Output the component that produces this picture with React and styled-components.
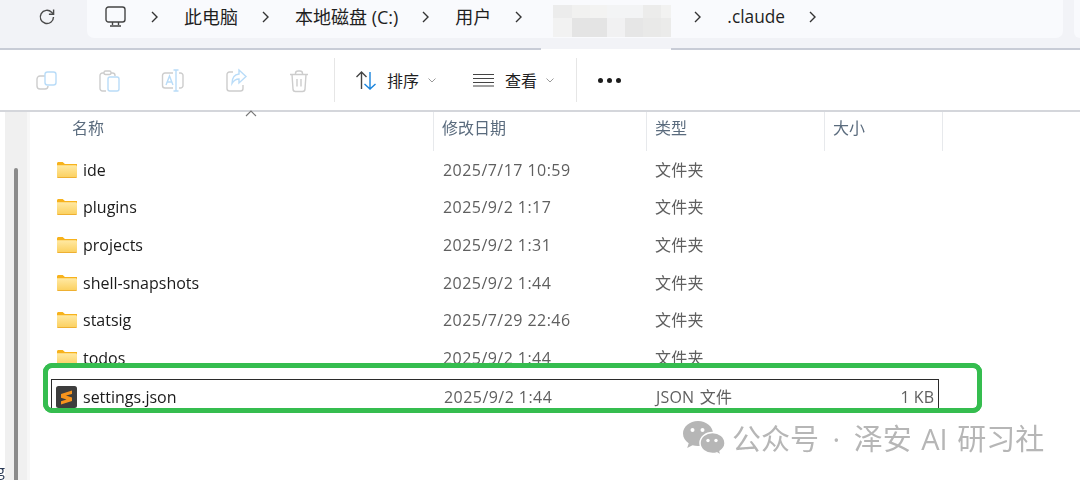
import styled, { createGlobalStyle } from 'styled-components';

const GlobalStyle = createGlobalStyle`
  html, body { margin: 0; padding: 0; background: #fff; }
  body {
    width: 1080px;
    height: 480px;
    overflow: hidden;
    font-family: "Open Sans", "Noto Sans CJK SC", sans-serif;
  }
`;

const Page = styled.div`
  position: relative;
  width: 1080px;
  height: 480px;
  overflow: hidden;
  display: flex;
  flex-direction: column;
  filter: blur(0.25px);
`;

const AddressBar = styled.div`
  height: 48px;
  flex: none;
  display: flex;
  background: #f2f3f7;
  border-bottom: 2px solid #c8ccd6;
`;
const RefreshSlot = styled.div`
  width: 87px;
  flex: none;
  display: flex;
  align-items: center;
  padding: 0 0 14px 38px;
  box-sizing: border-box;
`;
const Crumbs = styled.div`
  width: 976px;
  height: 38px;
  flex: none;
  display: flex;
  align-items: center;
  padding: 0 0 4px 18px;
  box-sizing: border-box;
  background: #f9fafd;
  border-radius: 0 0 7px 7px;
  font-size: 18px;
  color: #1f1f1f;
  margin-right: 11px;
`;
const NextPill = styled.div`
  flex: 1;
  height: 38px;
  background: #f9fafd;
  border-radius: 0 0 0 7px;
`;
const Chevron = styled.svg`
  width: 7px;
  height: 12px;
  flex: none;
  margin: 0 ${(p) => p.$gap ?? 26}px 0 ${(p) => p.$before ?? 24}px;
`;
const CrumbText = styled.span`
  white-space: nowrap;
  line-height: 1;
  font-size: ${(p) => p.$size ?? 18}px;
`;
const MosaicBand = styled.div`
  position: absolute;
  left: 541px;
  top: 38px;
  width: 130px;
  height: 11px;
  background: #f2f3f7;
  border-bottom: 3px solid #fff;
`;
const Mosaic = styled.div`
  position: absolute;
  left: 553px;
  top: 5px;
  display: grid;
  grid-template-columns: 19px 18px 17px 18px 18px 18px 10px;
  grid-template-rows: 13px 19px;
`;
const MosaicCell = styled.div`
  background: ${(p) => p.$c};
`;

const Toolbar = styled.div`
  height: 62px;
  flex: none;
  box-sizing: border-box;
  display: flex;
  align-items: center;
  background: #fff;
  border-bottom: 2px solid #d4d6db;
  padding-left: 36px;
  font-size: 16px;
  color: #1f1f1f;
`;
const ToolIcon = styled.svg`
  width: 22px;
  height: 22px;
  flex: none;
  overflow: visible;
  margin-right: ${(p) => p.$after ?? 41}px;
  fill: none;
  stroke: #cdcdcd;
  stroke-width: 1.4;
`;
const ToolDivider = styled.div`
  width: 1px;
  height: 44px;
  flex: none;
  background: #e6e6e6;
  margin-right: ${(p) => p.$after}px;
`;
const ToolLabel = styled.span`
  margin: 0 ${(p) => p.$after}px 0 ${(p) => p.$before}px;
  white-space: nowrap;
`;
const Caret = styled.svg`
  width: 8px;
  height: 5px;
  flex: none;
  margin-right: ${(p) => p.$after}px;
`;
const Dots = styled.div`
  display: flex;
  gap: 4px;
`;
const Dot = styled.i`
  width: 5px;
  height: 5px;
  border-radius: 50%;
  background: #1c1c1c;
`;

const Body = styled.div`
  flex: 1;
  display: flex;
  min-height: 0;
`;
const ClippedStrip = styled.div`
  width: 5px;
  flex: none;
  overflow: hidden;
  display: flex;
  align-items: flex-end;
  justify-content: flex-end;
  padding-bottom: 1px;
  font-size: 15px;
  line-height: 18px;
  color: #2a3a55;
`;
const Rail = styled.div`
  position: relative;
  width: 22px;
  flex: none;
  background: #f0f0f0;
`;
const RailEdge = styled.div`
  width: 3px;
  flex: none;
  background: #f7f7f7;
`;
const RailThumb = styled.div`
  position: absolute;
  left: 9px;
  top: 56px;
  bottom: 0;
  width: 4px;
  background: #8b8b8b;
  border-radius: 2px 2px 0 0;
`;
const List = styled.div`
  flex: 1;
  position: relative;
  min-width: 0;
`;
const HeaderRow = styled.div`
  height: 39px;
  display: grid;
  grid-template-columns: 404px 213px 178px 118px;
  font-size: 16px;
  color: #5a6b7d;
`;
const HeaderCell = styled.div`
  display: flex;
  align-items: center;
  box-sizing: border-box;
  padding-left: ${(p) => p.$pad}px;
  padding-bottom: 8px;
  border-right: 1px solid #e7e9ec;
  line-height: 1;
`;
const SortArrow = styled.svg`
  position: absolute;
  left: 215px;
  top: -2px;
  width: 12px;
  height: 7px;
`;
const Row = styled.div`
  height: 37.6px;
  margin-left: 21px;
  width: 888px;
  display: grid;
  grid-template-columns: 383px 213px 178px 114px;
  align-items: center;
  box-sizing: border-box;
  font-size: 16px;
  color: #5f5f5f;
`;
const SelectedRow = styled(Row)`
  position: relative;
  z-index: 2;
  height: 29px;
  margin-top: 2.4px;
  padding-top: 4px;
  border: solid #2b2b2b;
  border-width: 1px 1px 0 1px;
`;
const NameCell = styled.div`
  display: flex;
  align-items: center;
  gap: 6px;
  padding-left: 6px;
  color: #1a1a1a;
  white-space: nowrap;
`;
const DateCell = styled.div`
  padding-left: 9px;
  white-space: nowrap;
  letter-spacing: 0.45px;
`;
const TypeCell = styled.div`
  padding: 0 0 2px 8px;
  white-space: nowrap;
  word-spacing: 1px;
  letter-spacing: 0.2px;
`;
const SizeCell = styled.div`
  padding-right: 6px;
  text-align: right;
  white-space: nowrap;
`;
const FolderSvg = styled.svg`
  width: 20px;
  height: 16px;
  flex: none;
`;
const FileSvg = styled.svg`
  width: 21px;
  height: 22px;
  flex: none;
  margin-left: -2px;
`;
const GreenFrame = styled.div`
  position: absolute;
  z-index: 1;
  left: 13px;
  top: 251px;
  width: 939px;
  height: 50px;
  box-sizing: border-box;
  background: #fff;
  border: 5px solid #35bd4f;
  border-radius: 9px;
`;
const GreenCover = styled(GreenFrame)`
  z-index: 3;
  background: transparent;
`;
const Watermark = styled.div`
  position: absolute;
  z-index: 4;
  left: 683px;
  top: 417px;
  display: flex;
  align-items: center;
  gap: 7px;
  color: #b6b6b6;
  font-size: 29px;
  line-height: 38px;
  white-space: nowrap;
  font-family: "Open Sans", "Noto Sans CJK SC", sans-serif;
`;
const WatermarkText = styled.span`
  padding-top: 3px;
  word-spacing: 2px;
`;
const WatermarkDot = styled.span`
  margin: 0 4px;
`;

const folders = [
  ['ide', '2025/7/17 10:59'],
  ['plugins', '2025/9/2 1:17'],
  ['projects', '2025/9/2 1:31'],
  ['shell-snapshots', '2025/9/2 1:44'],
  ['statsig', '2025/7/29 22:46'],
  ['todos', '2025/9/2 1:44'],
];

const mosaic = [
  '#ececec', '#f1f1f0', '#f3f3f2', '#f3f4f5', '#f3f4f5', '#ececeb', '#f2f2f1',
  '#f2f2f2', '#e4e4e4', '#e4e4e4', '#f1f1f2', '#e6e6e6', '#e9e9e8', '#ebebea',
];

const ChevronIcon = (props) => (
  <Chevron viewBox="0 0 7 12" {...props}>
    <path d="M1 1l5 5-5 5" fill="none" stroke="#333" strokeWidth="1.4" />
  </Chevron>
);

const CaretIcon = ({ after }) => (
  <Caret viewBox="0 0 8 5" $after={after}>
    <path d="M.5.5L4 4 7.5.5" fill="none" stroke="#9a9a9a" strokeWidth="1" />
  </Caret>
);

const Folder = () => (
  <FolderSvg viewBox="0 0 20 16">
    <defs>
      <linearGradient id="fold" x1="0" y1="0" x2="0" y2="1">
        <stop offset="0" stopColor="#ffe9a3" />
        <stop offset="1" stopColor="#fbcf5c" />
      </linearGradient>
    </defs>
    <path d="M0 1.5C0 .6.6 0 1.5 0h4.2l2.2 2H20v3H0z" fill="#f7b21c" />
    <path d="M0 3.2h18.5c.9 0 1.5.6 1.5 1.5v9.8c0 .9-.6 1.5-1.5 1.5h-17C.6 16 0 15.4 0 14.5z" fill="url(#fold)" />
    <path d="M0 15h20v-.5c0 .9-.6 1.5-1.5 1.5h-17C.6 16 0 15.4 0 14.5z" fill="#eeb032" />
  </FolderSvg>
);

export default function App() {
  return (
    <Page>
      <GlobalStyle />
      <AddressBar>
        <RefreshSlot>
          <svg width="18" height="18" viewBox="0 0 18 18" fill="none" stroke="#4a4a4a" strokeWidth="1.4">
            <path d="M15.5 9a6.6 6.6 0 1 1-1.9-4.7l1.9 1.9" />
            <path d="M15.6 1.6v4.7h-4.7" />
          </svg>
        </RefreshSlot>
        <Crumbs>
          <svg width="21" height="22" viewBox="0 0 21 22" fill="none" stroke="#444" strokeWidth="1.4">
            <rect x="1" y="1" width="19" height="15" rx="2.5" />
            <path d="M7.5 16v3M13.5 16v3M5 20h11" />
          </svg>
          <ChevronIcon $before={25} />
          <CrumbText>此电脑</CrumbText>
          <ChevronIcon />
          <CrumbText>本地磁盘 (C:)</CrumbText>
          <ChevronIcon />
          <CrumbText>用户</CrumbText>
          <ChevronIcon $gap={172} />
          <ChevronIcon $before={0} />
          <CrumbText $size={17.3}>.claude</CrumbText>
          <ChevronIcon />
        </Crumbs>
        <NextPill />
      </AddressBar>
      <MosaicBand />
      <Mosaic>
        {mosaic.map((c, i) => (
          <MosaicCell key={i} $c={c} />
        ))}
      </Mosaic>
      <Toolbar>
        <ToolIcon viewBox="0 0 22 22">
          <path d="M9 7H4a3 3 0 0 0-3 3v7a3 3 0 0 0 3 3h5a3 3 0 0 0 3-3" />
          <rect x="9" y="3" width="11" height="13" rx="2.5" stroke="#b9dcf8" />
        </ToolIcon>
        <ToolIcon viewBox="0 0 22 22">
          <path d="M5 4H3.500A2.500 2.500 0 0 0 1 6.500v13A2.500 2.500 0 0 0 3.500 22H7M12 4h1.500A2.500 2.500 0 0 1 16 6.500V7" />
          <rect x="5" y="2" width="7" height="3.500" rx="1.500" />
          <rect x="9" y="8" width="11" height="14" rx="2" stroke="#b9dcf8" />
        </ToolIcon>
        <ToolIcon viewBox="0 0 22 22">
          <path d="M11 4H3A2.500 2.500 0 0 0 .5 6.500v10A2.500 2.500 0 0 0 3 19h8M17 4h1.500A2.500 2.500 0 0 1 21 6.500v10a2.500 2.500 0 0 1-2.500 2.500H17" />
          <path d="M11.500 1h5M11.500 22h5M14 1v21" stroke="#b9dcf8" />
          <path d="M4 16l3.500-9 3.500 9M5.200 13h4.600" stroke="#b9dcf8" />
        </ToolIcon>
        <ToolIcon viewBox="0 0 22 22">
          <path d="M18 16v3.500a2.500 2.500 0 0 1-2.500 2.500h-11A2.500 2.500 0 0 1 2 19.500v-14A2.500 2.500 0 0 1 4.500 3H8" />
          <path d="M14 1l7 6.500-7 6.500v-4c-3 0-5 1-7 4.500 0-5.500 2.500-9 7-9.500z" stroke="#b9dcf8" />
        </ToolIcon>
        <ToolIcon viewBox="0 0 22 22" $after={24}>
          <path d="M2 5.500h18M7.500 5.500V4.500a2.500 2.500 0 0 1 2.500-2.500h2a2.500 2.500 0 0 1 2.500 2.500v1M4 5.500l1 14.500a2.500 2.500 0 0 0 2.500 2.500h7a2.500 2.500 0 0 0 2.500-2.500l1-14.500M9 10v7.500M13 10v7.500" />
        </ToolIcon>
        <ToolDivider $after={20} />
        <svg width="22" height="22" viewBox="0 0 22 22" fill="none" strokeWidth="1.4">
          <path d="M6.500 20V3M1.500 8l5-5 5 5" stroke="#444" />
          <path d="M15 3v17M9.500 15l5.500 5 5.500-5" stroke="#1a84dc" />
        </svg>
        <ToolLabel $before={10} $after={9}>排序</ToolLabel>
        <CaretIcon after={37} />
        <svg width="21" height="14" viewBox="0 0 21 14" fill="none" stroke="#444" strokeWidth="1.2">
          <path d="M0 1.500h21M0 5.500h21M0 9.500h21M0 13h21" />
        </svg>
        <ToolLabel $before={11} $after={9}>查看</ToolLabel>
        <CaretIcon after={22} />
        <ToolDivider $after={21} />
        <Dots>
          <Dot />
          <Dot />
          <Dot />
        </Dots>
      </Toolbar>
      <Body>
        <ClippedStrip>g</ClippedStrip>
        <Rail>
          <RailThumb />
        </Rail>
        <RailEdge />
        <List>
          <SortArrow viewBox="0 0 12 7">
            <path d="M1 6l5-5 5 5" fill="none" stroke="#777" strokeWidth="1.1" />
          </SortArrow>
          <HeaderRow>
            <HeaderCell $pad={42}>名称</HeaderCell>
            <HeaderCell $pad={8}>修改日期</HeaderCell>
            <HeaderCell $pad={8}>类型</HeaderCell>
            <HeaderCell $pad={8}>大小</HeaderCell>
          </HeaderRow>
          {folders.map(([name, date]) => (
            <Row key={name}>
              <NameCell>
                <Folder />
                {name}
              </NameCell>
              <DateCell>{date}</DateCell>
              <TypeCell>文件夹</TypeCell>
              <SizeCell />
            </Row>
          ))}
          <GreenFrame />
          <SelectedRow>
            <NameCell>
              <FileSvg viewBox="0 0 21 22">
                <rect width="21" height="22" rx="2.500" fill="#3d3d3d" />
                <path d="M16 4.500L5 8v3.800l5.500 1.700L5 15.200V18.500l11-3.500v-3.600L10 9.600 16 8z" fill="#f7941d" />
              </FileSvg>
              settings.json
            </NameCell>
            <DateCell>2025/9/2 1:44</DateCell>
            <TypeCell>JSON 文件</TypeCell>
            <SizeCell>1 KB</SizeCell>
          </SelectedRow>
          <GreenCover />
        </List>
      </Body>
      <Watermark>
        <svg width="42" height="34" viewBox="0 0 42 34" fill="#b6b6b6">
          <path d="M15 0C6.700 0 0 5.600 0 12.500c0 4 2.200 7.500 5.700 9.800L4.200 27l5.300-2.800c1.700.5 3.500.8 5.500.8 8.300 0 15-5.600 15-12.500S23.300 0 15 0z" />
          <path d="M42 22c0-6-5.700-10.500-12.500-10.500S17 16 17 22s5.700 10.500 12.500 10.500c1.500 0 3-.2 4.300-.6l4.300 2.400-1.100-4c3-2 5-4.500 5-7.800z" stroke="#fff" strokeWidth="1.500" />
          <circle cx="9.500" cy="9" r="2" fill="#fff" />
          <circle cx="19.500" cy="9" r="2" fill="#fff" />
          <circle cx="25" cy="19.500" r="1.700" fill="#fff" />
          <circle cx="33" cy="19.500" r="1.700" fill="#fff" />
        </svg>
        <WatermarkText>
          公众号 <WatermarkDot>·</WatermarkDot> 泽安 AI 研习社
        </WatermarkText>
      </Watermark>
    </Page>
  );
}
